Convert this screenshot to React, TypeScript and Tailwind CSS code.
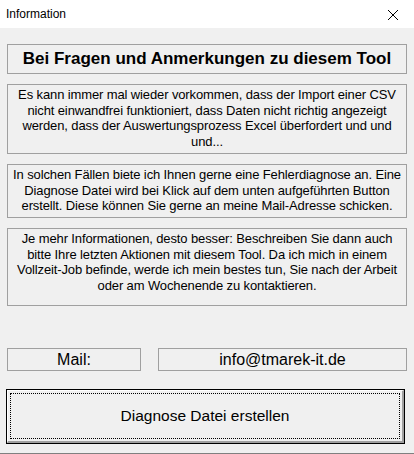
import React from 'react';

const font = { fontFamily: 'Tahoma, "Liberation Sans", Arial, sans-serif' };

const InfoBox: React.FC<{ className?: string; children: React.ReactNode }> = ({ className, children }) => (
  <div
    className={`border border-[#a0a0a0] px-[1px] pt-[2px] text-center text-[13px] leading-[15.6px] tracking-[-0.12px] text-black ${className ?? ''}`}
  >
    {children}
  </div>
);

export default function App() {
  return (
    <div className="w-[414px] h-[454px] bg-[#f0f0f0] flex flex-col overflow-hidden" style={font}>
      <div className="h-[28px] bg-white flex items-center justify-between pl-[6px] pr-[15px] shrink-0">
        <span className="text-[12px] text-black">Information</span>
        <svg width="12" height="12" viewBox="0 0 12 12" className="mt-[1px]">
          <path d="M1 1 L11 11 M11 1 L1 11" stroke="#000" strokeWidth="1" />
        </svg>
      </div>

      <div className="flex flex-col px-[7px] pt-[16px] grow">
        <div className="h-[30px] border border-[#a0a0a0] flex items-center justify-center">
          <span className="text-[17px] font-bold text-black">Bei Fragen und Anmerkungen zu diesem Tool</span>
        </div>

        <InfoBox className="mt-[10px] h-[70px]">
          Es kann immer mal wieder vorkommen, dass der Import einer CSV nicht einwandfrei funktioniert, dass Daten
          nicht richtig angezeigt werden, dass der Auswertungsprozess Excel überfordert und und und...
        </InfoBox>

        <InfoBox className="mt-[10px] h-[54px]">
          In solchen Fällen biete ich Ihnen gerne eine Fehlerdiagnose an. Eine Diagnose Datei wird bei Klick auf dem
          unten aufgeführten Button erstellt. Diese können Sie gerne an meine Mail-Adresse schicken.
        </InfoBox>

        <InfoBox className="mt-[10px] h-[78px]">
          Je mehr Informationen, desto besser: Beschreiben Sie dann auch bitte Ihre letzten Aktionen mit diesem Tool.
          Da ich mich in einem Vollzeit-Job befinde, werde ich mein bestes tun, Sie nach der Arbeit oder am Wochenende
          zu kontaktieren.
        </InfoBox>

        <div className="mt-[42px] flex gap-[17px] h-[23px]">
          <div className="w-[134px] border border-[#a0a0a0] flex items-center justify-center text-[16px] text-black">
            Mail:
          </div>
          <div className="grow border border-[#a0a0a0] flex items-center justify-center text-[16px] text-black">
            info@tmarek-it.de
          </div>
        </div>
      </div>

      <div className="px-[6px] pr-[9px] pb-[9px]">
        <button className="w-full h-[55px] border border-black bg-[#f0f0f0] block p-0">
          <div className="h-full border-t border-l border-white border-r-2 border-b-2 border-r-[#a0a0a0] border-b-[#a0a0a0] p-[2px]">
            <div className="h-full border border-dotted border-black flex items-center justify-center text-[15.5px] text-black">
              Diagnose Datei erstellen
            </div>
          </div>
        </button>
      </div>
      <div className="h-[1px] bg-[#808080] shrink-0" />
    </div>
  );
}
